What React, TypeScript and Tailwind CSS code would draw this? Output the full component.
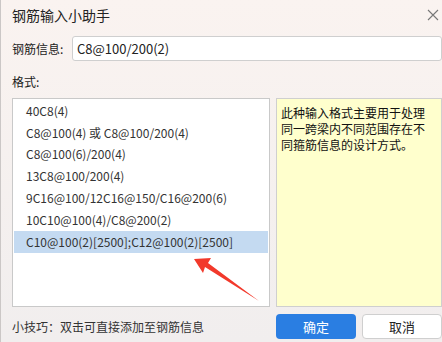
import * as React from 'react'

const formats = [
  '40C8(4)',
  'C8@100(4) 或 C8@100/200(4)',
  'C8@100(6)/200(4)',
  '13C8@100/200(4)',
  '9C16@100/12C16@150/C16@200(6)',
  '10C10@100(4)/C8@200(2)',
  'C10@100(2)[2500];C12@100(2)[2500]',
]

const font = { fontFamily: '"Noto Sans CJK SC", "Microsoft YaHei", sans-serif' }

export default function App() {
  const [selected, setSelected] = React.useState(6)

  return (
    <div
      className="relative w-[442px] h-[342px] overflow-hidden border-l border-[#cbc7c6] bg-gradient-to-b from-[#faf3f0] to-[#f1eeee] text-[12px] text-[#1b1b1b]"
      style={font}
    >
      {/* title bar */}
      <div className="flex h-[30px] items-center justify-between pl-[11px] pr-[2px]">
        <span className="text-[14px] leading-none text-[#222]">钢筋输入小助手</span>
        <svg width="12" height="12" viewBox="0 0 12 12" className="mr-[1px] mt-[-1px]">
          <path d="M1 1L11 11M11 1L1 11" stroke="#777" strokeWidth="1.1" />
        </svg>
      </div>

      {/* input row */}
      <div className="mt-[6px] flex items-center pl-[11px]">
        <span className="w-[60px] leading-none">钢筋信息:</span>
        <div className="flex h-[25px] flex-1 items-center rounded-[3px] border border-[#cfcfcf] bg-white pl-[4px] text-[13px] text-[#222]">
          C8@100/200(2)
        </div>
      </div>

      <div className="mt-[12px] h-[18px] pl-[11px] leading-[18px]">格式:</div>

      {/* list + description */}
      <div className="mt-[7px] flex h-[209px] gap-[6px] pl-[11px]">
        <div className="w-[258px] border border-[#c9c9c9] bg-white p-[1px]">
          {formats.map((f, i) => (
            <div
              key={f}
              onClick={() => setSelected(i)}
              className={`flex h-[21.8px] items-center pl-[12px] text-[#333] ${
                i === selected ? 'bg-[#c4daf1]' : ''
              }`}
            >
              {f}
            </div>
          ))}
        </div>
        <div className="flex-1 border border-[#cfcfcf] bg-[#ffffcd] pl-[4px] pr-[14px] pt-[6px] leading-[16px] text-[#111]">
          此种输入格式主要用于处理同一跨梁内不同范围存在不同箍筋信息的设计方式。
        </div>
      </div>

      {/* footer */}
      <div className="mt-[7px] flex h-[25px] items-center pl-[11px]">
        <span className="flex-1 text-[#333]">小技巧：双击可直接添加至钢筋信息</span>
        <div className="flex gap-[6px]">
          <button className="h-[25px] w-[80px] rounded-[4px] bg-[#2a7ee2] text-[13px] text-white">
            确定
          </button>
          <button className="h-[25px] w-[80px] rounded-[4px] border border-[#cfcfcf] bg-white text-[13px] text-[#222]">
            取消
          </button>
        </div>
      </div>

      {/* red annotation arrow */}
      <svg className="pointer-events-none absolute left-0 top-0" width="442" height="342">
        <polygon
          points="193,259 210,258 207,263 258,301 204,267 202,273"
          fill="#f2392b"
        />
      </svg>
    </div>
  )
}
